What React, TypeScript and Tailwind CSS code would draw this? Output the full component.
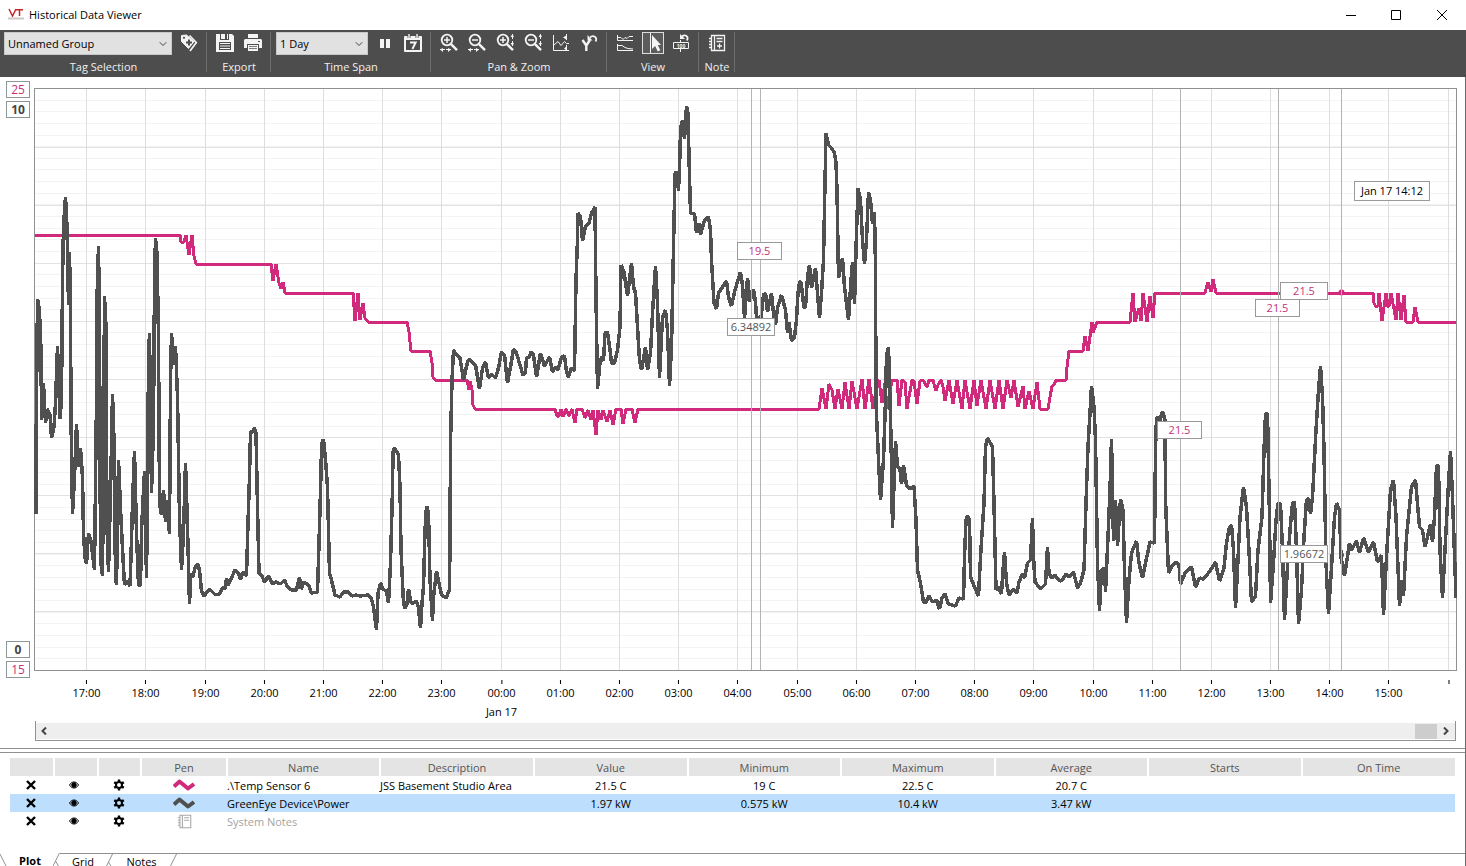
import { useState, type ReactNode } from "react";
import { ChevronDown } from "lucide-react";
import clsx from "clsx";

// plot area, in the units the traces are stored in
const plot = { left: 34, top: 88, width: 1423, height: 583 };

const pctX = (x: number) => `${((x - plot.left) / plot.width) * 100}%`;
const pctY = (y: number) => `${((y - plot.top) / plot.height) * 100}%`;

const hourLines = [
    86, 145, 205, 264, 323, 382, 441, 501, 560, 619, 678, 737,
    797, 856, 915, 974, 1033, 1093, 1152, 1211, 1270, 1329, 1388, 1448
];
const hours = [
    "17:00", "18:00", "19:00", "20:00", "21:00", "22:00", "23:00", "00:00",
    "01:00", "02:00", "03:00", "04:00", "05:00", "06:00", "07:00", "08:00",
    "09:00", "10:00", "11:00", "12:00", "13:00", "14:00", "15:00", ""
];
const cursors = [751, 760, 1180, 1278, 1341];

const temperature = `
35,235 180,235 181,242 184,242 186,235 189,255 192,235 194,256 196,264 271,264 273,281 276,264 279,283 281,289
283,282 285,293 353,293 355,321 358,293 360,320 363,303 365,318 368,322 407,322 409,332 411,351 430,351 432,363
433,377 435,380 467,380 469,390 470,381 472,390 473,405 475,409 555,409 557,416 559,416 561,409 563,417 566,409
569,416 572,409 575,423 577,409 582,409 585,418 588,410 591,420 593,410 596,435 598,410 601,420 603,410 607,422
610,410 613,425 616,409 621,409 623,424 626,409 632,409 635,423 638,409 819,409 822,388 826,409 829,384 832,390
835,409 838,389 842,409 845,382 849,409 852,381 857,409 862,379 865,409 869,379 873,409 877,384 879,380 882,403
885,383 887,409 892,380 897,380 899,406 902,380 905,382 907,409 912,380 914,381 917,404 920,381 923,380 927,387
929,380 933,380 936,391 938,385 941,380 943,387 945,401 949,380 953,404 957,380 962,409 965,380 970,409 974,380
977,406 981,380 986,409 990,380 995,409 999,380 1003,409 1007,380 1011,398 1014,380 1018,407 1023,386 1025,409
1029,391 1033,409 1037,382 1040,409 1048,409 1050,397 1052,386 1054,385 1056,380 1066,380 1067,367 1069,351
1083,351 1085,336 1088,351 1092,322 1093,333 1097,322 1130,322 1133,293 1135,322 1139,308 1141,321 1143,293
1147,322 1150,296 1153,318 1155,293 1205,293 1208,282 1211,292 1213,279 1216,293 1373,293 1374,303 1376,307
1378,306 1379,293 1382,321 1386,293 1387,306 1389,306 1391,293 1396,320 1398,293 1401,320 1404,295 1406,322
1413,322 1415,307 1418,322 1456,322`;

const power = `
36,514 36,450 37.5,299 39,307 40,323 41,350 41.5,420 43.5,383 45.5,423 47,409 50,415 51.5,438 54,427 55.5,403
57.5,346 60,419 61.5,400 62.5,280 63.5,226 65.5,197 67,226 68.5,305 69.5,252 70.5,308 71,418 72.5,514 74.5,477
76.5,424 78.5,467 80.5,448 82.5,477 83.5,533 85,558 86.5,564 88.5,533 91,541 94.5,570 95.5,483 96.5,400 97,298
98.5,246 99.5,323 100.5,560 102.5,576 103.5,460 104.5,296 106,327 107,527 108.5,572 110.5,493 112.5,394 114,440
115.5,577 116.5,585 117.5,527 118.5,460 121,520 123.5,567 124.5,585 126.5,581 130,586 131.5,540 132.5,503
134.5,451 136.5,533 138.5,585 140.5,586 141.5,530 144.5,471 146.5,578 147.5,493 148.5,360 149.5,333 151.5,493
153.5,427 154.5,280 155.5,238 157,253 158.5,337 159.5,503 161.5,515 163.5,490 165.5,522 167,500 169.5,534
170.5,383 171.5,333 173.5,365 175.5,346 177.5,397 179.5,517 181.5,570 183.5,533 185.5,463 187.5,527 189.5,604
191,573 192.5,578 195,568 197.5,564 199.5,570 201.5,591 204,596 209.5,589 215,594.5 219,594.5 222.5,588 225.5,588
226.5,578 228,585 231.5,578 235,570 238.5,573 240.5,579 243.5,572 246.5,576 247.5,540 249.5,477 250.5,432
252.5,432 254.5,428 256,433 257.5,507 259,573 261.5,575 264.5,582 268.5,576 272.5,584 276,582 280.5,584 284.5,580
287.5,587 291.5,590 296.5,590 299.5,577 301,589 304,582 308.5,585 311.5,593 317.5,592 319,543 321,473 321.5,445
323.5,439 325.5,460 327.5,487 329.5,573 331.5,580 335,595 340,597 343.5,592 348,592 352,596 356,595 360,596
368.5,595 371.5,599 373.5,607 376.5,630 378,593 380.5,583 382.5,589 386.5,591 388.5,603 390.5,563 392.5,490
393,452 394.5,448 398.5,455 400,487 401,550 403.5,603 405,608 407,604 408.5,589 411,603 413,603 416.5,601
418.5,608 420.5,628 422,603 423.5,587 425,530 426.5,506 428.5,512 430,580 432.5,621 433.5,597 436.5,571 439,583
441.5,595 446,598 449.5,590 450,540 450.5,443 452,380 453.5,350 456.5,355 460,358 463.5,380 467.5,362 469.5,359
472.5,363 475.5,365 479.5,389 482.5,368 485.5,362 488.5,378 491.5,374 495.5,378 498.5,368 501.5,352 504.5,355
507.5,383 510.5,367 513.5,349 516.5,353 520,365 523,375 525.5,372 526.5,358 529.5,357 531,352 533.5,355 536.5,377
540.5,353 544.5,366 549.5,357 552.5,372 555.5,367 558,370 561.5,357 564.5,356 566.5,372 568.5,377 571.5,368
574.5,371 576,280 577.5,240 578,213 580.5,217 582.5,241 585.5,226 589,223 591.5,213 595,207 596,297 597.5,389
600,363 601.5,357 603.5,361 605,333 607.5,332 610,350 611.5,363 614.5,363 617.5,350 620,327 621,265 624,272
627.5,296 631.5,263 633.5,287 635.5,293 637.5,327 639.5,360 641.5,370 645.5,347 647.5,370 650.5,353 652.5,313
655.5,266 657.5,303 659.5,378 662.5,317 665.5,310 667.5,330 669.5,386 671.5,347 673.5,247 675,173 677,172
678.5,191 680,153 680.5,128 682.5,120 684.5,139 686.5,106 688,113 689,157 690.5,213 694.5,214 696.5,233 699,223
700.5,235 704.5,220 708.5,217 710.5,230 711.5,260 714,303 716.5,309 718.5,293 722.5,287 726.5,281 728.5,297
731.5,306 735,290 740.5,272 742.5,285 744.5,318 747.5,278 750,302 753.5,289 755.5,302 756.5,318 761,318 763.5,295
765.5,293 767.5,312 771.5,293 773.5,313 775.5,325 777.5,308 781.5,295 785.5,310 787.5,333 789,322 791.5,341
794.5,337 796.5,320 798,293 799.5,282 801,282 804,308 805.5,307 807.5,277 809.5,265 811.5,288 815.5,268 817.5,293
819.5,318 821.5,293 823.5,260 824.5,207 826,133 828.5,145 831.5,148 834.5,153 836,163 837,190 838.5,278 842.5,258
844.5,287 848.5,320 851,280 852.5,262 854.5,304 856.5,233 858,188 860.5,200 862.5,240 864.5,264 866.5,240
868.5,192 870.5,200 872.5,224 874.5,212 875.5,267 876,403 878.5,460 880.5,500 883.5,460 885.5,400 886.5,355
888.5,347 890,400 891,437 892.5,528 895.5,441 897.5,467 900,469 901.5,484 903.5,465 906.5,485 910,489 914,486
916,520 917.5,570 920.5,583 923.5,602 925.5,603 929,596 932.5,602 936.5,600 939.5,609 942,598 945,594 948.5,604
955.5,606 959,598 963.5,599 964.5,557 966,520 967.5,516 969.5,520 970.5,577 975,588 978.5,596 980.5,557 984,503
985.5,447 987.5,438 992.5,447 994,503 996,590 998,587 1001.5,594 1002.5,577 1004.5,552 1006.5,583 1009,595
1013.5,589 1017,593 1019,582 1022.5,574 1024.5,578 1027.5,563 1030.5,560 1032.5,518 1033.5,557 1035,582
1040.5,589 1045.5,584 1047.5,547 1049,573 1051.5,578 1055,575 1058.5,580 1061.5,581 1066,574 1069.5,577
1073.5,572 1077.5,588 1080.5,583 1084,570 1086,503 1088,447 1090,413 1091.5,386 1094,407 1095.5,440 1097.5,563
1099.5,611 1101.5,570 1104.5,568 1105.5,592 1108,537 1110,490 1111.5,439 1113.5,541 1115.5,500 1117.5,546
1120.5,499 1123,510 1124.5,570 1126.5,623 1129,580 1131.5,553 1136.5,541 1139,563 1142.5,578 1145.5,563 1150,542
1154.5,543 1155.5,450 1156.5,417 1160,420 1162.5,411 1165,420 1165.5,500 1168.5,573 1171.5,567 1175.5,562
1179,565 1180.5,584 1185.5,572 1191.5,567 1195.5,587 1199.5,578 1203.5,579 1210,571 1215.5,562 1219.5,581
1224,568 1226.5,543 1229.5,527 1231.5,525 1233.5,550 1235.5,608 1237.5,570 1240,517 1243.5,487 1246.5,507
1249.5,560 1251.5,602 1255.5,596 1258,550 1262,517 1264,450 1265.5,414 1267.5,413 1269.5,517 1270.5,603
1273.5,563 1276,520 1278,503 1280.5,504 1282.5,550 1284.5,620 1287.5,567 1290,530 1292.5,503 1294.5,502
1296.5,550 1298.5,624 1301.5,590 1304,537 1306.5,500 1308.5,498 1310.5,514 1312.5,497 1316,430 1318.5,390
1320.5,366 1322.5,397 1324,450 1326,563 1328.5,614 1331.5,567 1334.5,517 1336.5,503 1339.5,510 1341,557
1344.5,576 1349.5,543 1351.5,550 1356.5,541 1359.5,553 1363.5,538 1368.5,552 1373.5,542 1377.5,562 1381.5,555
1383.5,615 1386.5,557 1390.5,490 1393.5,480 1396,517 1399.5,606 1401.5,580 1403.5,596 1406.5,537 1411.5,487
1415.5,480 1419.5,527 1422.5,530 1425,547 1427.5,537 1430.5,524 1432.5,542 1434.5,517 1436.5,466 1438.5,466
1440,550 1442.5,598 1445,550 1448.5,483 1450.5,451 1452.5,497 1456,598`;

const tips = [
    { x: 737, y: 242, text: "19.5", style: "w-[45px] h-[18px] text-[#c4307a]" },
    { x: 727, y: 318, text: "6.34892", style: "w-12 h-[18px] text-[#555]" },
    { x: 1157, y: 421, text: "21.5", style: "w-[45px] h-[18px] text-[#c4307a]" },
    { x: 1255, y: 299, text: "21.5", style: "w-[45px] h-[18px] text-[#c4307a]" },
    { x: 1280, y: 282, text: "21.5", style: "w-12 h-[18px] text-[#c4307a]" },
    { x: 1280, y: 545, text: "1.96672", style: "w-12 h-[18px] text-[#555]" },
    { x: 1354, y: 181, text: "Jan 17 14:12", style: "w-[76px] h-5 text-black" }
];

const columns = ["Pen", "Name", "Description", "Value", "Minimum", "Maximum", "Average", "Starts", "On Time"];

const rows = [
    { name: ".\\Temp Sensor 6", description: "JSS Basement Studio Area", values: ["21.5 C", "19 C", "22.5 C", "20.7 C", "", ""], pen: "#d12a7c" },
    { name: "GreenEye Device\\Power", description: "", values: ["1.97 kW", "0.575 kW", "10.4 kW", "3.47 kW", "", ""], pen: "#4f4f4f", selected: true },
    { name: "System Notes", description: "", values: ["", "", "", "", "", ""], pen: null }
];

function Icon({ children }: { children: ReactNode }) {
    return (
        <svg viewBox="0 0 18 18" className="w-[18px] h-[18px] overflow-visible" fill="none" stroke="#f4f4f4" strokeWidth="1">
            {children}
        </svg>
    );
}

function TagIcon() {
    return (
        <Icon>
            <path d="M1.5 1.5 L6.5 1 L14 7.5 L8.5 14.5 L1.5 7.5Z" fill="#f4f4f4" strokeLinejoin="round" />
            <path d="M9.5 1.5 L16.3 8.5 L10 17" strokeWidth="1.7" />
            <circle cx="4" cy="3.8" r="1.1" fill="#4d4d4d" stroke="none" />
            <path d="M9 5.5v6M6 8.5h6" stroke="#4d4d4d" strokeWidth="2" />
        </Icon>
    );
}

function SaveIcon() {
    return (
        <Icon>
            <path d="M0 0H16L18 2V18H0Z" fill="#f4f4f4" stroke="none" />
            <path d="M4 0h9v6H4z" fill="#4d4d4d" stroke="none" />
            <path d="M5 0h4v5H5zM11 0h1v5h-1z" fill="#f4f4f4" stroke="none" />
            <path d="M3 8h12v8H3z" fill="#4d4d4d" stroke="none" />
            <path d="M4 9.5h10M4 12h10M4 14.5h10" />
        </Icon>
    );
}

function PrintIcon() {
    return (
        <Icon>
            <path d="M4 0h10v4H4z" fill="#f4f4f4" stroke="none" />
            <path d="M1 5h16l1 1v8h-3v-4H3v4H0V6z" fill="#f4f4f4" stroke="none" />
            <path d="M4 11h10v6H4z" fill="#f4f4f4" stroke="none" />
            <path d="M5 12.5h8M5 14.5h8" stroke="#7b7b7b" />
            <path d="M14 7.5h2" stroke="#4d4d4d" />
        </Icon>
    );
}

function PauseIcon() {
    return (
        <Icon>
            <path d="M4 5h4v9H4zM10 5h4v9h-4z" fill="#f4f4f4" stroke="none" />
        </Icon>
    );
}

function CalendarIcon() {
    return (
        <Icon>
            <path d="M1 3h16v14H1z" strokeWidth="2" strokeLinejoin="round" />
            <path d="M1 2h16v4H1z" fill="#f4f4f4" stroke="none" />
            <path d="M5 0v4M13 0v4" stroke="#4d4d4d" strokeWidth="3" />
            <path d="M5 0v4M13 0v4" strokeWidth="1.4" />
            <path d="M6 8.6h5.6L8.4 15" strokeWidth="2" />
        </Icon>
    );
}

function ZoomIcon({ zoomIn, vertical }: { zoomIn?: boolean; vertical?: boolean }) {
    return (
        <Icon>
            <circle cx="7" cy="6" r="5.3" strokeWidth="1.8" />
            <path d="M4 6h6" strokeWidth="1.5" />
            {zoomIn && <path d="M7 3v6" strokeWidth="1.5" />}
            <path d="M11 10.2 L17 16.2" strokeWidth="2.4" />
            {vertical ? (
                <>
                    <path d="M16.5 0v12" strokeDasharray="5 2" />
                    <path d="M14.5 3l2-3 1.5 3zM14.5 9l2 3 1.5-3z" fill="#f4f4f4" stroke="none" />
                </>
            ) : (
                <>
                    <path d="M0 15.5h11" strokeDasharray="5 1" />
                    <path d="M3 14v4L0 15.5zM8 14v4l3-2.500z" fill="#f4f4f4" stroke="none" />
                </>
            )}
        </Icon>
    );
}

function FitIcon() {
    return (
        <Icon>
            <path d="M1.5 1v15.5H17" />
            <path d="M2 11l4-3.5 3 4 3.5-4 2 2H17" />
            <path d="M14.5 0v6M14.5 11v6" />
            <path d="M15 1v5l-4-2.5zM15 12v5l-3-2.5z" fill="#f4f4f4" stroke="none" />
        </Icon>
    );
}

function ResetYIcon() {
    return (
        <Icon>
            <path d="M2.5 6l3.8 5.500L10 6M6.300 11v6" strokeWidth="2.4" />
            <path d="M10 3.500c3-3 8-.5 5.500 4" strokeWidth="1.8" />
            <path d="M7.500 1v5.500h5z" fill="#f4f4f4" stroke="none" />
        </Icon>
    );
}

function LanesIcon() {
    return (
        <Icon>
            <path d="M1.5 1v5.5H17M1.5 10v6.5H17" />
            <path d="M2 3.5h3l2 2 2-2 2 1 2-2h4M2 11.5h4l3 2 3 1 5 .5" />
        </Icon>
    );
}

function CursorIcon() {
    return (
        <Icon>
            <path d="M6.5-1v20" />
            <path d="M8 1v14l3.200-3 2.500 5.500 2.600-1.200-2.600-5.300H17z" fill="#f4f4f4" stroke="none" />
        </Icon>
    );
}

function ValueIcon() {
    return (
        <Icon>
            <path d="M1.5 8.5h15v6h-15zM8.5 15v3M8.5 6v2" />
            <text x="9" y="13.5" textAnchor="middle" fontSize="5" fontWeight="700" fill="#f4f4f4" stroke="none">100</text>
            <path d="M10 2.500c3-2.500 7-.5 5 4" strokeWidth="1.8" />
            <path d="M8 0v5h5z" fill="#f4f4f4" stroke="none" />
        </Icon>
    );
}

function NoteIcon({ plain }: { plain?: boolean }) {
    return (
        <svg viewBox="0 0 18 18" className={plain ? "w-[15px] h-[15px]" : "w-[18px] h-[18px]"} fill="none" stroke={plain ? "#a8a8a8" : "#f4f4f4"} strokeWidth="1.3">
            <path d="M3.5 1.5h13v15h-13zM6.5 1.5v15M1 4.5h3M1 7.5h3M1 10.5h3M1 13.5h3" />
            <path d="M8.5 4.5h6M8.5 7.5h6" />
            {!plain && <path d="M9 12h5M11.5 9.5v5" />}
        </svg>
    );
}

function GearIcon() {
    return (
        <svg viewBox="0 0 12 12" className="w-3 h-3" fill="none" stroke="#000">
            <circle cx="6" cy="6" r="3" strokeWidth="2" />
            <path d="M6 .5v2M6 9.500v2M1.200 3.200l2 1.200M8.800 7.600l2 1.200M1.200 8.800l2-1.200M8.800 4.400l2-1.200" strokeWidth="2.4" />
        </svg>
    );
}

function ToolButton({ label, active, children }: { label: string; active?: boolean; children: ReactNode }) {
    return (
        <div className="w-7 flex justify-center">
            <button
                aria-label={label}
                className={clsx("w-[22px] h-[22px] flex items-center justify-center", active && "border border-[#ddd] bg-[#5c5c5c]")}
            >
                {children}
            </button>
        </div>
    );
}

function ToolGroup({ title, children }: { title: string; children: ReactNode }) {
    return (
        <div className="h-10 mt-0.5 pl-1 pr-[3px] border-r border-[#6e6e6e]">
            <div className="h-[27px] flex items-start justify-center">{children}</div>
            <div className="h-4 leading-4 text-center text-[#f0f0f0]">{title}</div>
        </div>
    );
}

function ToolSelect({ label, value, style }: { label: string; value: string; style: string }) {
    return (
        <div className={clsx("relative h-[23px] mr-[3px]", style)}>
            <select aria-label={label} className="appearance-none w-full h-full bg-[#e1e1e1] text-black pl-[3px] pr-5 border border-[#c8c8c8] leading-4">
                <option>{value}</option>
            </select>
            <ChevronDown className="absolute right-[3px] top-1.5 w-3 h-3 text-[#444] pointer-events-none" strokeWidth={2} />
        </div>
    );
}

function TitleBar() {
    return (
        <header className="h-[30px] flex items-center pl-2 shrink-0">
            <svg viewBox="0 0 16 14" className="w-4 h-3.5" fill="none">
                <path d="M1 1l3.500 7L8 1M8 1.700h7M11.500 1.700V8" stroke="#c8232c" strokeWidth="1.5" />
                <path d="M0 10.5h16" stroke="#c9c9c9" strokeWidth="2" />
            </svg>
            <h1 className="ml-[5px] flex-1 text-black">Historical Data Viewer</h1>
            <button aria-label="Minimize" className="w-[45px] h-full flex items-center justify-center">
                <svg viewBox="0 0 10 10" className="w-2.5 h-2.5" stroke="#000"><path d="M0 5.5h10" /></svg>
            </button>
            <button aria-label="Maximize" className="w-[45px] h-full flex items-center justify-center">
                <svg viewBox="0 0 10 10" className="w-2.5 h-2.5" fill="none" stroke="#000"><path d="M.5.5h9v9h-9z" /></svg>
            </button>
            <button aria-label="Close" className="w-[47px] h-full flex items-center justify-center mr-px">
                <svg viewBox="0 0 10 10" className="w-2.5 h-2.5" stroke="#000"><path d="M0 0l10 10M10 0L0 10" /></svg>
            </button>
        </header>
    );
}

function Toolbar() {
    return (
        <div className="h-[47px] bg-[#4d4d4d] flex shrink-0">
            <ToolGroup title="Tag Selection">
                <ToolSelect label="Tag group" value="Unnamed Group" style="w-[168px]" />
                <ToolButton label="Select tags"><TagIcon /></ToolButton>
            </ToolGroup>
            <ToolGroup title="Export">
                <ToolButton label="Save"><SaveIcon /></ToolButton>
                <ToolButton label="Print"><PrintIcon /></ToolButton>
            </ToolGroup>
            <ToolGroup title="Time Span">
                <div className="w-px" />
                <ToolSelect label="Time span" value="1 Day" style="w-[92px]" />
                <ToolButton label="Pause"><PauseIcon /></ToolButton>
                <ToolButton label="Go to date"><CalendarIcon /></ToolButton>
            </ToolGroup>
            <ToolGroup title="Pan & Zoom">
                <ToolButton label="Zoom in time"><ZoomIcon zoomIn /></ToolButton>
                <ToolButton label="Zoom out time"><ZoomIcon /></ToolButton>
                <ToolButton label="Zoom in value"><ZoomIcon zoomIn vertical /></ToolButton>
                <ToolButton label="Zoom out value"><ZoomIcon vertical /></ToolButton>
                <ToolButton label="Fit scale"><FitIcon /></ToolButton>
                <ToolButton label="Reset scale"><ResetYIcon /></ToolButton>
            </ToolGroup>
            <ToolGroup title="View">
                <ToolButton label="Separate lanes"><LanesIcon /></ToolButton>
                <ToolButton label="Cursor" active><CursorIcon /></ToolButton>
                <ToolButton label="Reset values"><ValueIcon /></ToolButton>
            </ToolGroup>
            <ToolGroup title="Note">
                <ToolButton label="Add note"><NoteIcon /></ToolButton>
            </ToolGroup>
        </div>
    );
}

function ScaleBox({ children, style }: { children: ReactNode; style: string }) {
    return (
        <div className={clsx("h-[17px] leading-[15px] border border-[#8c9696] text-center text-xs", style)}>{children}</div>
    );
}

function Chart() {
    const minor = Array.from({ length: 49 }, (_, i) => plot.top + Math.round((i + 1) * 11.64));

    return (
        <div className="relative flex-1 min-h-0">
            <svg
                viewBox={`${plot.left} ${plot.top} ${plot.width} ${plot.height}`}
                preserveAspectRatio="none"
                className="absolute inset-0 w-full h-full"
                fill="none"
            >
                <g shapeRendering="crispEdges">
                    {minor.map((y) => (
                        <path key={y} d={`M34 ${y + 0.5}H1457`} stroke="#f3f3f3" />
                    ))}
                    {[147, 205, 263, 321, 379, 437, 495, 553, 611].map((y) => (
                        <path key={y} d={`M34 ${y + 0.5}H1457`} stroke="#e2e2e2" />
                    ))}
                    {hourLines.map((x) => (
                        <path key={x} d={`M${x + 0.5} 88V671`} stroke="#dedede" />
                    ))}
                    <path d="M34.5 88.5H1456.5V670.5H34.5Z" stroke="#8e9292" />
                    <polyline points={temperature} stroke="#d12a7c" strokeWidth="3" strokeLinejoin="bevel" />
                    <polyline points={power} stroke="#505050" strokeWidth="3.5" strokeLinejoin="bevel" />
                </g>
                <circle cx="1341.5" cy="292.5" r="3" fill="#d12a7c" />
                <circle cx="1341.5" cy="555" r="2.5" fill="#505050" />
                {cursors.map((x) => (
                    <path key={x} d={`M${x + 0.5} 89V670`} stroke="#b4b4b4" shapeRendering="crispEdges" />
                ))}
            </svg>
            {tips.map((tip, idx) => (
                <div
                    key={idx}
                    className={clsx("absolute bg-white border border-[#999] flex items-center justify-center whitespace-nowrap", tip.style)}
                    style={{ left: pctX(tip.x), top: pctY(tip.y) }}
                >
                    {tip.text}
                </div>
            ))}
        </div>
    );
}

function TimeAxis() {
    return (
        <div className="relative h-[50px]">
            {hourLines.map((x, idx) => (
                <div key={x} className="absolute top-[9px] -translate-x-1/2 flex flex-col items-center text-black" style={{ left: pctX(x + 0.5) }}>
                    <span className="w-px h-1 bg-black" />
                    <span className="leading-[18px]">{hours[idx]}</span>
                    {hours[idx] === "00:00" && <span className="leading-5 whitespace-nowrap">Jan 17</span>}
                </div>
            ))}
        </div>
    );
}

function TimeScroll() {
    return (
        <div className="h-5 mx-px pt-0.5 pb-px border-x border-b border-[#8e9292]">
            <div className="h-4 bg-[#eee] flex items-center">
                <button aria-label="Scroll back" className="w-4 h-4 flex items-center justify-center">
                    <svg viewBox="0 0 8 8" className="w-2 h-2" fill="none" stroke="#444" strokeWidth="2"><path d="M6 .5L2.500 4 6 7.500" /></svg>
                </button>
                <div className="flex-1" />
                <div className="w-[22px] h-[15px] bg-[#cdcdcd]" />
                <button aria-label="Scroll forward" className="w-[18px] h-4 flex items-center justify-center">
                    <svg viewBox="0 0 8 8" className="w-2 h-2" fill="none" stroke="#444" strokeWidth="2"><path d="M2 .5L5.500 4 2 7.500" /></svg>
                </button>
            </div>
        </div>
    );
}

function PenTable() {
    return (
        <table className="w-full table-fixed border-collapse text-black">
            <colgroup>
                <col className="w-11" />
                <col className="w-11" />
                <col className="w-[43px]" />
                <col className="w-[86px]" />
                <col className="w-[153px]" />
                <col className="w-[154px]" />
                {columns.slice(3).map((c) => <col key={c} />)}
            </colgroup>
            <thead>
                <tr className="h-[18px] bg-[#e4e4e4] text-[#555]">
                    <th className="p-0 border-r-2 border-white" />
                    <th className="p-0 border-r-2 border-white" />
                    <th className="p-0 border-r-2 border-white" />
                    {columns.map((c) => (
                        <th key={c} className="p-0 pt-px font-normal leading-[17px] border-r-2 border-white last:border-r-0">{c}</th>
                    ))}
                </tr>
            </thead>
            <tbody>
                {rows.map((row) => (
                    <tr key={row.name} className={clsx("h-[18px] leading-[17px]", row.selected && "bg-[#bddffd]")}>
                        <td className="p-0">
                            <button aria-label={`Remove ${row.name}`} className="flex w-full justify-center pr-0.5">
                                <svg viewBox="0 0 10 10" className="w-2.5 h-2.5" stroke="#000" strokeWidth="2.4"><path d="M1 1l8 8M9 1L1 9" /></svg>
                            </button>
                        </td>
                        <td className="p-0">
                            <button aria-label={`Show ${row.name}`} className="flex w-full justify-center pr-1">
                                <svg viewBox="0 0 10 8" className="w-2.5 h-2" fill="none" stroke="#000">
                                    <path d="M.5 4C2 1.500 3.500 1 5 1s3 .5 4.500 3C8 6.500 6.500 7 5 7S2 6.500.5 4z" />
                                    <circle cx="5" cy="4" r="2.3" fill="#000" />
                                </svg>
                            </button>
                        </td>
                        <td className="p-0">
                            <button aria-label={`Settings ${row.name}`} className="flex w-full justify-center pr-0.5">
                                <GearIcon />
                            </button>
                        </td>
                        <td className="p-0">
                            <div className="flex justify-center">
                                {row.pen ? (
                                    <svg viewBox="0 0 22 12" className="w-[22px] h-3" fill="none" stroke={row.pen} strokeWidth="4">
                                        <path d="M1 7.500L6.500 2.500 15 9.500 21 5" strokeLinejoin="round" />
                                    </svg>
                                ) : (
                                    <NoteIcon plain />
                                )}
                            </div>
                        </td>
                        <td className={clsx("p-0 pt-px whitespace-nowrap", !row.pen && "text-[#a3a3a3]")}>{row.name}</td>
                        <td className="p-0 pt-px whitespace-nowrap">{row.description}</td>
                        {row.values.map((value, idx) => (
                            <td key={idx} className="p-0 pt-px text-center">{value}</td>
                        ))}
                    </tr>
                ))}
            </tbody>
        </table>
    );
}

function Slash({ joined }: { joined?: boolean }) {
    return (
        <svg viewBox="0 0 7 13" className="w-[7px] h-[13px] shrink-0" fill="none" stroke="#8e9292">
            <path d="M6.5 0L0 13" />
            {joined && <path d="M2.5 8L5.5 13" />}
        </svg>
    );
}

function ViewTabs() {
    const [tab, setTab] = useState("Plot");
    const tabStyle = (name: string) => clsx("h-4 leading-4 text-black", tab === name && "font-bold");

    return (
        <nav className="h-[13px] flex overflow-hidden shrink-0">
            <svg viewBox="0 0 7 13" className="w-[7px] h-[13px] shrink-0" fill="none" stroke="#8e9292">
                <path d="M0 1L6 13" />
            </svg>
            <button className={clsx("w-[46px]", tabStyle("Plot"))} onClick={() => setTab("Plot")}>Plot</button>
            <Slash joined />
            <div className="flex-1 flex border-t border-[#8e9292]">
                <button className={clsx("w-[46px]", tabStyle("Grid"))} onClick={() => setTab("Grid")}>Grid</button>
                <Slash joined />
                <button className={clsx("w-[57px]", tabStyle("Notes"))} onClick={() => setTab("Notes")}>Notes</button>
                <Slash />
            </div>
        </nav>
    );
}

export default function App() {
    return (
        <div className="h-screen min-h-[480px] flex flex-col overflow-hidden bg-white text-[11px] font-['Open_Sans','Noto_Sans',sans-serif]">
            <TitleBar />
            <Toolbar />
            <main className="flex-1 min-h-0 flex flex-col border-r border-[#6b6b6b]">
                <section className="flex-1 min-h-0 flex pr-2 pb-[7px]">
                    <div className="w-[34px] pl-1.5 pr-1 pt-1 pb-[63px] flex flex-col justify-between">
                        <div className="space-y-[3px]">
                            <ScaleBox style="text-[#c4307a]">25</ScaleBox>
                            <ScaleBox style="text-[#444] font-bold">10</ScaleBox>
                        </div>
                        <div className="space-y-[3px]">
                            <ScaleBox style="text-[#444] font-bold">0</ScaleBox>
                            <ScaleBox style="text-[#c4307a]">15</ScaleBox>
                        </div>
                    </div>
                    <div className="flex-1 min-w-0 flex flex-col pt-[11px]">
                        <Chart />
                        <TimeAxis />
                        <TimeScroll />
                    </div>
                </section>
                <div className="h-[5px] border-y border-[#8e9292] shrink-0" />
                <section className="h-[100px] pt-[5px] px-2.5 shrink-0">
                    <PenTable />
                </section>
                <ViewTabs />
            </main>
        </div>
    );
}
